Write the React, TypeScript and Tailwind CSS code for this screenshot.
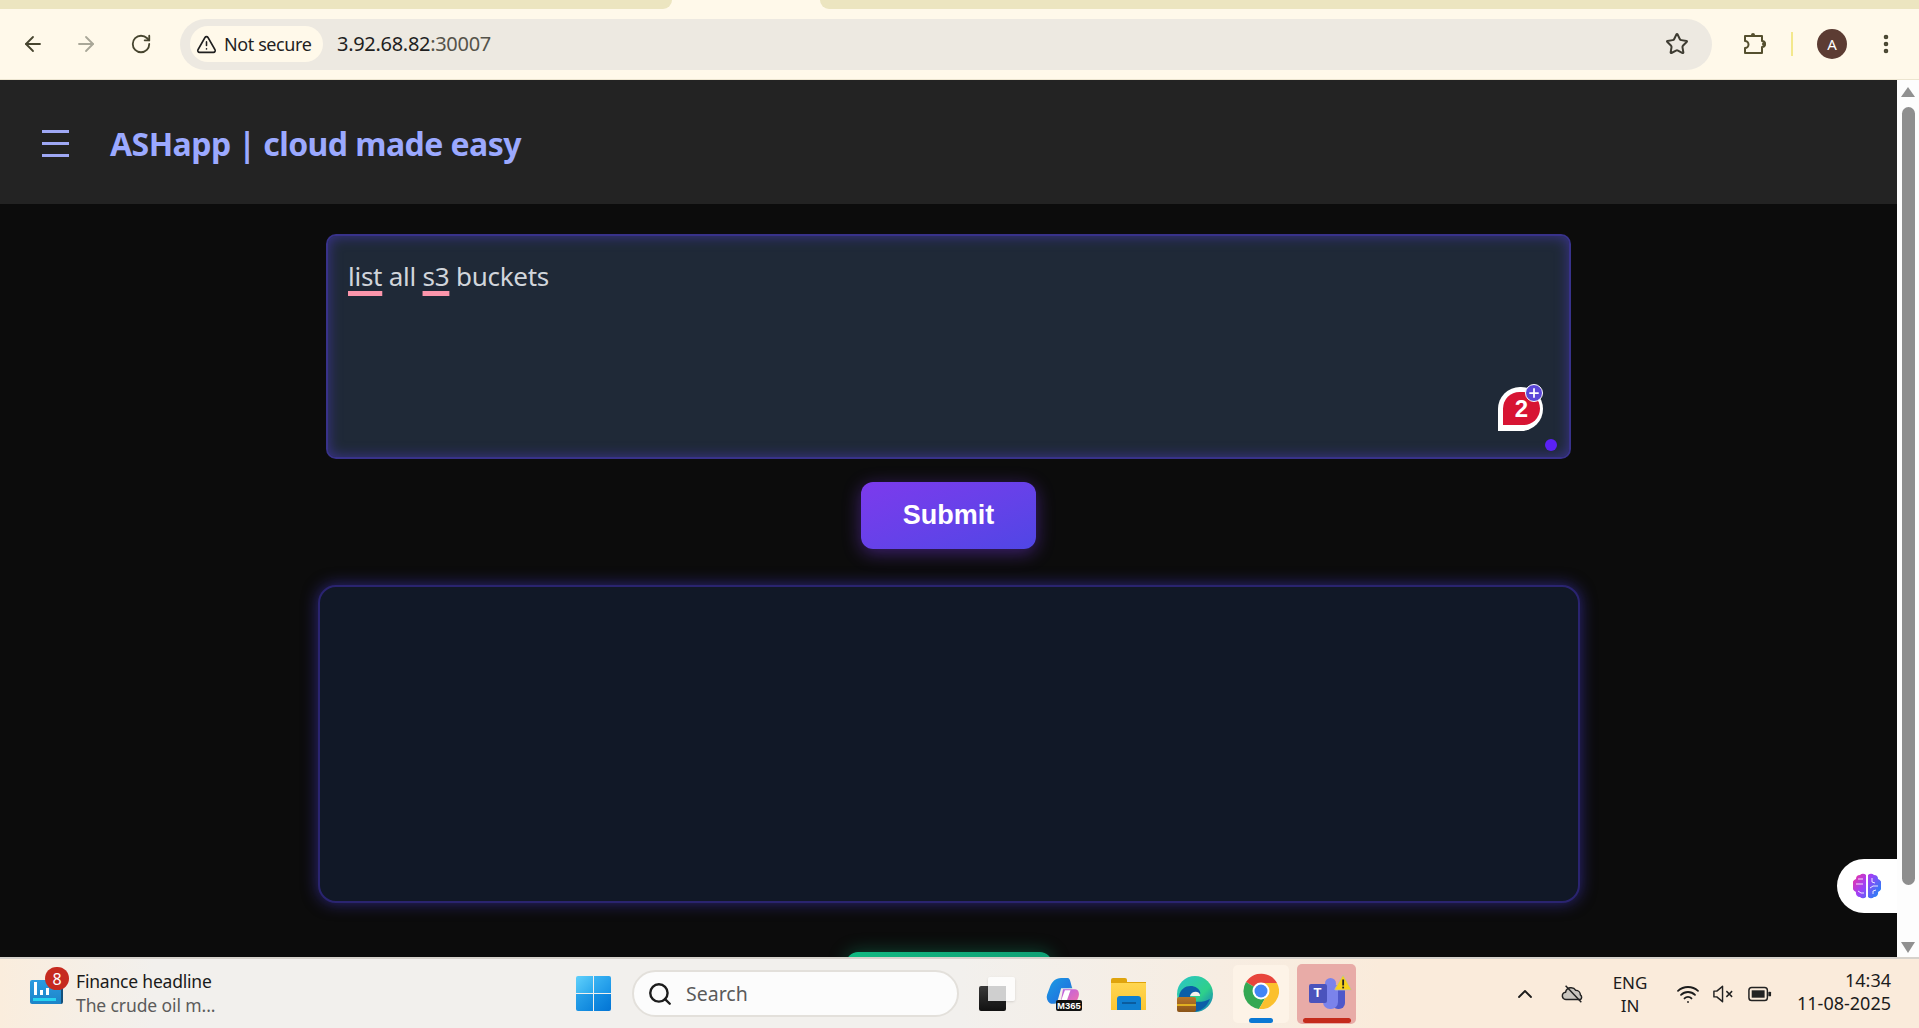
import { Search, Star, ChevronUp, ArrowLeft, ArrowRight, RotateCw, EllipsisVertical, Wifi, TriangleAlert, Plus } from 'lucide-react'

const segoe = { fontFamily: '"Noto Sans", "Open Sans", sans-serif' }
const arial = { fontFamily: '"Liberation Sans", sans-serif' }

function BrowserBar() {
  return (
    <div className="h-[80px] shrink-0 flex flex-col bg-[#fff9ea]">
      <div className="h-[9px] shrink-0 flex">
        <div className="w-[672px] h-[9px] bg-[#ece5c0] rounded-br-[10px]" />
        <div className="w-[148px]" />
        <div className="flex-1 h-[9px] bg-[#ece5c0] rounded-bl-[10px]" />
      </div>
      <div className="flex-1 flex items-center bg-[#fff9ea] border-b border-[#ece5d0] pl-[21px]">
        <ArrowLeft className="w-[24px] h-[24px] text-[#47452f]" strokeWidth={1.8} />
        <ArrowRight className="w-[24px] h-[24px] text-[#a9a798] ml-[29px]" strokeWidth={1.8} />
        <RotateCw className="w-[22px] h-[22px] text-[#47452f] ml-[32px]" strokeWidth={2} />
        <div className="ml-[28px] w-[1532px] h-[51px] rounded-full bg-[#ede9e1] flex items-center pl-[10px] pr-[23px]">
          <div className="flex items-center h-[36px] pl-[6px] w-[133px] rounded-full bg-[#fff9ea] gap-[7px] text-[18px] text-[#1f1f1f]" style={segoe}>
            <TriangleAlert className="w-[21px] h-[21px] text-[#1f1f1f] shrink-0" strokeWidth={1.8} />
            <span className="tracking-[-0.4px] whitespace-nowrap">Not secure</span>
          </div>
          <div className="ml-[14px] text-[20px] tracking-[-0.3px] text-[#1f1f1f]" style={segoe}>
            3.92.68.82<span className="text-[#55534a]">:30007</span>
          </div>
          <Star className="ml-auto w-[24px] h-[24px] text-[#3e3c32]" strokeWidth={2} />
        </div>
        <svg viewBox="0 0 24 24" className="ml-[30px] w-[24px] h-[24px]" fill="none" stroke="#55502f" strokeWidth="2">
          <path d="M3 4h17v5a2 2 0 0 1 0 6v6H3v-5a3 3 0 0 0 0-7z" strokeLinejoin="round" />
          <circle cx="11" cy="3" r="2" fill="#55502f" stroke="none" />
          <circle cx="22" cy="12" r="2" fill="#55502f" stroke="none" />
        </svg>
        <div className="ml-[25px] w-[2px] h-[24px] bg-[#f3e88c]" />
        <div className="ml-[24px] w-[30px] h-[30px] rounded-full bg-[#5c3c33] text-white text-[15px] flex items-center justify-center" style={segoe}>A</div>
        <EllipsisVertical className="ml-[27px] w-[24px] h-[24px] text-[#47452f]" strokeWidth={2.6} />
      </div>
    </div>
  )
}

function PageHeader() {
  return (
    <header className="h-[124px] shrink-0 bg-[#232323] flex items-center pl-[42px] pt-[3px]">
      <div className="w-[27px] flex flex-col gap-[9px]">
        <div className="h-[3px] bg-[#9fa8f5]" />
        <div className="h-[3px] bg-[#9fa8f5]" />
        <div className="h-[3px] bg-[#9fa8f5]" />
      </div>
      <h1 className="ml-[41px] pt-[1px] text-[32px] font-bold tracking-[-0.55px] text-[#9ba9ff]" style={segoe}>
        ASHapp | cloud made easy
      </h1>
    </header>
  )
}

function NoteBadge() {
  return (
    <div className="absolute right-[26px] bottom-[26px] w-[45px] h-[44px]">
      <div className="w-[45px] h-[44px] bg-white rounded-t-full rounded-br-full pl-[5px] pt-[5px]">
        <div className="w-[37px] h-[33px] bg-[#d71433] rounded-t-full rounded-br-full text-white text-[24px] font-bold flex items-center justify-center" style={arial}>2</div>
      </div>
      <div className="absolute right-0 top-[-3px] w-[18px] h-[18px] rounded-full bg-[#5b46d8] border border-white flex items-center justify-center">
        <Plus className="w-[14px] h-[14px] text-white" strokeWidth={3} />
      </div>
    </div>
  )
}

function Main() {
  return (
    <main className="relative flex-1 min-h-0 overflow-hidden bg-[#0c0c0c] flex flex-col items-center pt-[30px]">
      <div className="relative w-[1245px] h-[225px] shrink-0 rounded-[10px] bg-[#1f2937] border-2 border-[#38328a] shadow-[inset_0_0_14px_#3b348f] pl-[20px] pt-[21px] text-[26px] text-[#d1d5db]" style={segoe}>
        <span className="tracking-[-0.25px]">
          <span className="underline decoration-[#fb95ab] decoration-[5px] underline-offset-[5px]">list</span> all{' '}
          <span className="underline decoration-[#fb95ab] decoration-[5px] underline-offset-[5px]">s3</span> buckets
        </span>
        <NoteBadge />
        <div className="absolute right-[12px] bottom-[6px] w-[12px] h-[12px] rounded-full bg-[#5b21f5]" />
      </div>
      <button className="mt-[23px] w-[175px] h-[67px] shrink-0 rounded-[12px] bg-gradient-to-br from-[#7c3aed] to-[#4f46e5] text-white text-[27px] font-bold shadow-[0_4px_18px_rgba(124,58,237,0.45)]" style={arial}>
        Submit
      </button>
      <div className="mt-[36px] w-[1262px] h-[318px] shrink-0 rounded-[18px] bg-[#111827] border-2 border-[#2a2470] shadow-[0_0_16px_rgba(67,56,202,0.6)]" />
      <div className="mt-[49px] w-[206px] h-[40px] shrink-0 rounded-[12px] bg-gradient-to-r from-[#10b981] to-[#0f9f74] shadow-[0_0_18px_rgba(16,185,129,0.35)]" />
      <div className="absolute right-0 top-[655px] w-[60px] h-[54px] rounded-l-[27px] bg-white flex items-center pl-[16px]">
        <BrainIcon />
      </div>
    </main>
  )
}

function Scrollbar() {
  return (
    <div className="w-[22px] shrink-0 bg-[#fdfdfd] flex flex-col items-center pt-[7px] pb-[4px]">
      <div className="w-0 h-0 border-x-[7px] border-x-transparent border-b-[10px] border-b-[#909090]" />
      <div className="mt-[10px] w-[13px] h-[778px] rounded-full bg-[#8e8e8e]" />
      <div className="mt-auto w-0 h-0 border-x-[7px] border-x-transparent border-t-[11px] border-t-[#909090]" />
    </div>
  )
}

function BrainIcon() {
  return (
    <svg viewBox="0 0 28 26" className="w-[28px] h-[26px]">
      <defs>
        <linearGradient id="brain" x1="0" y1="0" x2="1" y2="0.6">
          <stop offset="0" stopColor="#f5309a" />
          <stop offset="0.5" stopColor="#a040f7" />
          <stop offset="1" stopColor="#2f7cf6" />
        </linearGradient>
      </defs>
      <path d="M13 2a4 4 0 0 0-6 0 4 4 0 0 0-4 4 5 5 0 0 0-3 7 5 5 0 0 0 3 6 4 4 0 0 0 4 5 4 4 0 0 0 6 0zM15 2a4 4 0 0 1 6 0 4 4 0 0 1 4 4 5 5 0 0 1 3 7 5 5 0 0 1-3 6 4 4 0 0 1-4 5 4 4 0 0 1-6 0z" fill="url(#brain)" />
      <path d="M3 11h7M5 6h5M5 18l3 2h3M19 5v4l3 1M25 13h-5l-3 2M20 21v-3l3-1" stroke="#fff" strokeWidth="1" fill="none" opacity="0.85" />
    </svg>
  )
}

function WidgetIcon() {
  return (
    <div className="relative w-[33px] h-[37px] self-start mt-[8px]">
      <div className="absolute left-0 bottom-0 w-[33px] h-[24px] rounded-[2px] bg-gradient-to-b from-[#2a9be0] to-[#1d84c8] border-r-2 border-[#14507a]">
        <div className="absolute left-[4px] top-[2px] flex items-end gap-[3px] h-[13px]">
          <div className="w-[3px] h-[13px] bg-white" />
          <div className="w-[3px] h-[5px] bg-white" />
          <div className="w-[3px] h-[7px] bg-white" />
        </div>
        <div className="absolute left-[3px] right-[5px] bottom-[3px] h-[3px] bg-[#27d3f0]" />
      </div>
      <div className="absolute left-[15px] top-0 w-[24px] h-[23px] rounded-full bg-[#c62a1f] text-white text-[16px] flex items-center justify-center" style={segoe}>8</div>
    </div>
  )
}

function WindowsIcon() {
  return (
    <div className="grid grid-cols-2 gap-[1px] w-[35px] h-[35px]">
      <div className="rounded-tl-[2px] bg-gradient-to-br from-[#5fd0fb] to-[#29a8ec]" />
      <div className="rounded-tr-[2px] bg-gradient-to-br from-[#3bb5f3] to-[#1793e6]" />
      <div className="rounded-bl-[2px] bg-gradient-to-br from-[#2aa4ea] to-[#0b84dc]" />
      <div className="rounded-br-[2px] bg-gradient-to-br from-[#1792e4] to-[#0474d4]" />
    </div>
  )
}

function TaskViewIcon() {
  return (
    <div className="relative w-[36px] h-[34px]">
      <div className="absolute left-0 bottom-0 w-[27px] h-[25px] rounded-[2px] bg-gradient-to-b from-[#3a3a3a] to-[#111]" />
      <div className="absolute right-0 top-0 w-[27px] h-[24px] rounded-[2px] bg-white/80 shadow-sm" />
      <div className="absolute left-[9px] top-[9px] w-[18px] h-[15px] bg-[#cfcfcf]" />
    </div>
  )
}

function CopilotIcon() {
  return (
    <div className="relative w-[37px] h-[34px]">
      <svg viewBox="0 0 36 32" className="absolute left-0 top-0 w-[36px] h-[30px]">
        <defs>
          <linearGradient id="cop1" x1="0" y1="0" x2="1" y2="1">
            <stop offset="0" stopColor="#1b9de2" />
            <stop offset="0.6" stopColor="#1f7be0" />
            <stop offset="1" stopColor="#7ed957" />
          </linearGradient>
          <linearGradient id="cop2" x1="0" y1="0" x2="1" y2="1">
            <stop offset="0" stopColor="#b55ee8" />
            <stop offset="1" stopColor="#f472a8" />
          </linearGradient>
        </defs>
        <path d="M16 1h7c3 0 3 6 5 11H16l-4 14c-1 3-5 3-8 2-3-2-4-6-3-9l3-8C6 5 10 1 16 1z" fill="url(#cop1)" />
        <path d="M18 13h13c3 0 4 3 4 6-1 5-3 9-7 10H15z" fill="url(#cop2)" />
        <path d="M20 14h6l-5 14h-6z" fill="#fff" />
      </svg>
      <div className="absolute right-0 bottom-0 w-[26px] h-[11px] rounded-[2px] bg-[#111] text-white text-[9.5px] font-bold leading-[11px] text-center" style={arial}>M365</div>
    </div>
  )
}

function FolderIcon() {
  return (
    <div className="relative w-[35px] h-[32px]">
      <div className="absolute left-0 top-0 w-[16px] h-[6px] rounded-t-[2px] bg-[#dfa40d]" />
      <div className="absolute left-0 top-[4px] w-[35px] h-[28px] bg-gradient-to-b from-[#ffd650] to-[#fcc632] border-t border-[#dfa40d]" />
      <div className="absolute left-[6px] bottom-0 w-[24px] h-[14px] rounded-t-[3px] bg-[#0f7fd0] flex items-center justify-center">
        <div className="w-[14px] h-[2px] bg-[#0a5c9e]" />
      </div>
    </div>
  )
}

function EdgeIcon() {
  return (
    <div className="relative w-[36px] h-[36px]">
      <svg viewBox="0 0 36 36" className="w-[36px] h-[36px]">
        <defs>
          <linearGradient id="edge" x1="0" y1="0" x2="1" y2="1">
            <stop offset="0" stopColor="#2bc4c9" />
            <stop offset="0.6" stopColor="#2ed08a" />
            <stop offset="1" stopColor="#0f6fc6" />
          </linearGradient>
        </defs>
        <circle cx="18" cy="18" r="18" fill="url(#edge)" />
        <path d="M2 20C4 10 14 8 20 12c4 3 4 6 2 8h-9c0 6 10 8 20 3-3 8-10 13-17 13C7 36 0 29 2 20z" fill="#0c5ea8" />
        <path d="M13 20c1-5 9-6 10-1 0 1 0 1-1 1z" fill="#f6f2ea" />
      </svg>
      <div className="absolute left-0 bottom-0 w-[19px] h-[15px] rounded-[2px] bg-gradient-to-b from-[#b9762a] to-[#8a5418]">
        <div className="h-[2px] mt-[7px] bg-[#e0b020]" />
      </div>
    </div>
  )
}

function ChromeIcon() {
  return (
    <svg viewBox="0 0 36 36" className="w-[36px] h-[36px] mb-[6px]">
      <path d="M18 18 L3 9 A18 18 0 0 1 34 10 L18 10z" fill="#e8453c" />
      <path d="M18 18 L3 9 A18 18 0 0 0 16 36 L24 22z" fill="#34a853" />
      <path d="M18 10h16a18 18 0 0 1-18 26l8-14z" fill="#fbc02d" />
      <circle cx="18" cy="18" r="8.5" fill="#fff" />
      <circle cx="18" cy="18" r="6.5" fill="#4285f4" />
    </svg>
  )
}

function TeamsIcon() {
  return (
    <div className="relative w-[44px] h-[42px]">
      <div className="absolute left-[27px] top-[12px] w-[13px] h-[24px] rounded-[6px] bg-[#4f58ca]" />
      <div className="absolute left-[18px] top-[10px] w-[15px] h-[26px] rounded-[7px] bg-[#7b83eb]" />
      <div className="absolute left-[20px] top-[5px] w-[11px] h-[11px] rounded-full bg-[#7b83eb]" />
      <div className="absolute left-[4px] top-[11px] w-[18px] h-[19px] rounded-[2px] bg-[#4b53bc] text-white text-[13px] font-bold flex items-center justify-center" style={arial}>T</div>
      <svg viewBox="0 0 24 22" className="absolute right-[-3px] top-[1px] w-[18px] h-[17px]">
        <path d="M12 1 23 20a1 1 0 0 1-1 1H2a1 1 0 0 1-1-1z" fill="#f7d21c" stroke="#b9b9b9" />
        <rect x="11" y="7" width="2.4" height="8" fill="#222" />
        <rect x="11" y="16.5" width="2.4" height="2.4" fill="#222" />
      </svg>
    </div>
  )
}

function TrayIcons() {
  return (
    <div className="flex items-center text-[#1c1c1c]">
      <ChevronUp className="w-[24px] h-[24px]" strokeWidth={1.8} />
      <svg viewBox="0 0 26 20" className="ml-[24px] w-[24px] h-[20px]" fill="none" stroke="#222" strokeWidth="1.6">
        <path d="M6 16a4 4 0 0 1-1-8 6 6 0 0 1 11-2 5 5 0 0 1 5 5 3 3 0 0 1 0 5z" fill="#c9c5bf" />
        <path d="M5 1l17 18" />
      </svg>
      <div className="ml-[25px] w-[40px] text-center text-[17px] leading-[23px]" style={segoe}>ENG<br />IN</div>
      <Wifi className="ml-[26px] w-[24px] h-[24px]" strokeWidth={1.8} />
      <svg viewBox="0 0 24 20" className="ml-[12px] w-[23px] h-[20px]" fill="none" stroke="#222" strokeWidth="1.5">
        <path d="M2 7v6h3l6 5V2L5 7z" strokeLinejoin="round" />
        <path d="M15 7l6 6M21 7l-6 6" />
      </svg>
      <svg viewBox="0 0 26 18" className="ml-[13px] w-[24px] h-[18px]" fill="none" stroke="#222" strokeWidth="1.6">
        <rect x="1" y="2" width="20" height="14" rx="3" />
        <rect x="4" y="5" width="14" height="8" fill="#222" stroke="none" />
        <rect x="22" y="6.5" width="3" height="5" rx="1" fill="#222" stroke="none" />
      </svg>
    </div>
  )
}

function Taskbar() {
  return (
    <footer className="h-[71px] shrink-0 border-t-2 border-[#d6d2cc] bg-[linear-gradient(90deg,#faeddd_0%,#f2f0ed_8%,#f2f0ed_50%,#faebdb_72%,#faebdb_100%)] flex items-center" style={segoe}>
      <div className="ml-[30px] flex items-center w-[546px] h-full">
        <WidgetIcon />
        <div className="ml-[13px] mb-[2px]">
          <div className="text-[17.5px] leading-[24px] text-[#1a1a1a] tracking-[-0.2px]">Finance headline</div>
          <div className="text-[17.5px] leading-[24px] text-[#5b5b5b] tracking-[-0.1px]">The crude oil m...</div>
        </div>
      </div>
      <WindowsIcon />
      <div className="ml-[21px] w-[327px] h-[47px] rounded-full bg-[#fcfcfc] border-2 border-[#e3e0db] flex items-center pl-[13px]">
        <Search className="w-[26px] h-[26px] text-[#1c1c1c]" strokeWidth={2.2} />
        <span className="ml-[13px] text-[19.5px] text-[#5a5a5a]">Search</span>
      </div>
      <div className="ml-[20px]"><TaskViewIcon /></div>
      <div className="ml-[30px]"><CopilotIcon /></div>
      <div className="ml-[29px]"><FolderIcon /></div>
      <div className="ml-[31px]"><EdgeIcon /></div>
      <div className="relative ml-[20px] w-[56px] h-[58px] rounded-[5px] bg-[#fdf3e7] flex items-center justify-center">
        <ChromeIcon />
        <div className="absolute bottom-0 left-[16px] w-[24px] h-[5px] rounded-full bg-[#0a78d4]" />
      </div>
      <div className="relative ml-[8px] w-[59px] h-[60px] rounded-[5px] bg-[#e8aba7] flex items-center justify-center">
        <TeamsIcon />
        <div className="absolute bottom-[1px] left-[6px] w-[48px] h-[5px] rounded-full bg-[#c42b1c]" />
      </div>
      <div className="ml-auto flex items-center pr-[28px] text-[#1c1c1c]">
        <TrayIcons />
        <div className="ml-[25px] mb-[3px] text-right text-[18px] leading-[23px]">
          <div>14:34</div>
          <div>11-08-2025</div>
        </div>
      </div>
    </footer>
  )
}

export default function App() {
  return (
    <div className="w-[1919px] h-[1028px] overflow-hidden flex flex-col">
      <BrowserBar />
      <div className="flex-1 min-h-0 flex">
        <div className="flex-1 min-w-0 flex flex-col">
          <PageHeader />
          <Main />
        </div>
        <Scrollbar />
      </div>
      <Taskbar />
    </div>
  )
}
